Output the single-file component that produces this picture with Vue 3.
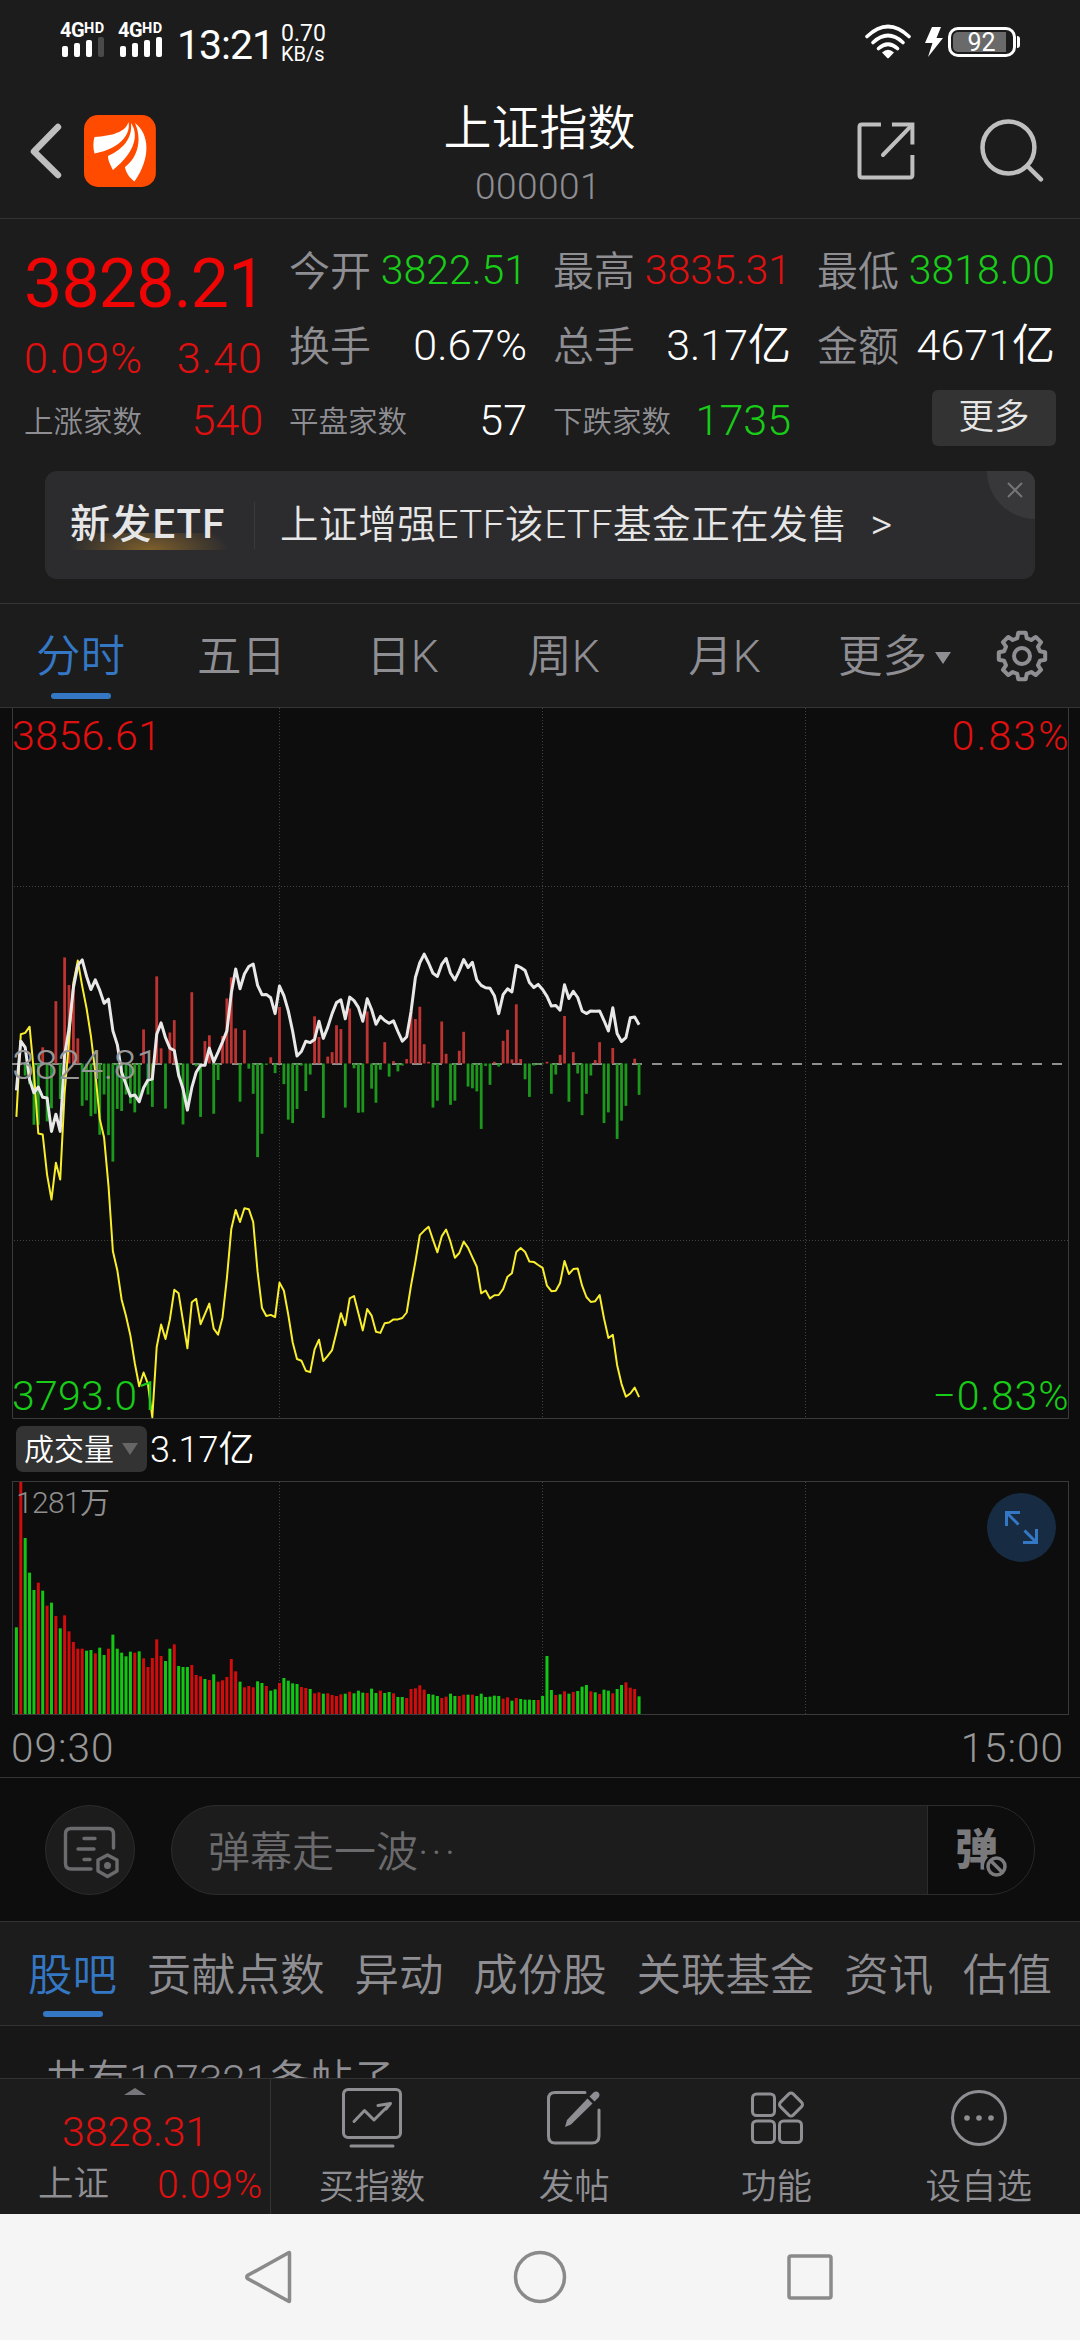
<template>
  <div class="page">
    <div class="status-bar">
      <div class="status-bar__left">
        <div v-for="(level, n) in [3, 4]" :key="n" class="signal">
          <div class="signal__net">4G<sup>HD</sup></div>
          <div class="signal__bars">
            <i
              v-for="b in 4"
              :key="b"
              :class="['signal__bar', `signal__bar--${b}`, { 'is-off': b > level }]"
            />
          </div>
        </div>
        <span class="clock">13:21</span>
        <div class="speed">
          <span>0.70</span>
          <span class="speed__unit">KB/s</span>
        </div>
      </div>
      <div class="status-bar__right">
        <svg class="wifi" width="48" height="36" viewBox="0 0 48 36">
          <g fill="none" stroke="#fff" stroke-width="3.6" stroke-linecap="round">
            <path d="M3 12.5Q24-7.5 45 12.5" />
            <path d="M9 18.5Q24 4.5 39 18.5" />
            <path d="M14.5 24.5Q24 16 33.500 24.500" />
          </g>
          <path d="M18 28.500Q24 23 30 28.500L24.800 34Q24 34.600 23.200 34Z" fill="#fff" />
        </svg>
        <svg class="bolt" width="20" height="32" viewBox="0 0 20 32">
          <path d="M8 1H17L12.500 12H19L4 31L8.500 17H1Z" fill="#fff" />
        </svg>
        <div class="battery"><span>92</span></div>
      </div>
    </div>

    <header class="header">
      <svg class="header__back" width="32" height="56" viewBox="0 0 32 56">
        <path d="M28 4L4 28.500L28 52" fill="none" stroke="#bfbfbf" stroke-width="6.500" stroke-linecap="round" stroke-linejoin="round" />
      </svg>
      <svg class="header__logo" width="72" height="72" viewBox="0 0 72 72">
        <rect width="72" height="72" rx="14" fill="#ff4b00" />
        <g fill="#fff">
          <path d="M44.500 7C47 16 40 33 10.500 38.500C9 33 9 27 10.500 22C28 21 42 17 44.500 7Z" />
          <path d="M47 8C55 19 52 37 29 55C27 51 24 46 24 41C38 35 49 24 47 8Z" />
          <path d="M51 8C66 19 67 44 50.500 66.500C46 63 42 58 41 52C55 42 58 23 51 8Z" />
        </g>
      </svg>
      <div class="header__title">
        <h1>上证指数</h1>
        <p>000001</p>
      </div>
      <svg class="header__share" width="58" height="58" viewBox="0 0 58 58">
        <g fill="none" stroke="#bfbfbf" stroke-width="4">
          <path d="M24 2.500H5Q2.500 2.500 2.500 5V53Q2.500 55.500 5 55.500H53Q55.500 55.500 55.500 53V33" />
          <path d="M35 2.500H55.500V22.500" />
          <path d="M54 4L26 33" stroke-linecap="round" />
        </g>
      </svg>
      <svg class="header__search" width="64" height="64" viewBox="0 0 64 64">
        <g fill="none" stroke="#bfbfbf" stroke-width="4.500" stroke-linecap="round">
          <circle cx="28.500" cy="28.500" r="26" />
          <path d="M47.500 47L61 60.500" />
        </g>
      </svg>
    </header>

    <section class="quote">
      <div class="quote__grid">
        <div class="quote__main">
          <div class="price">3828.21</div>
          <div class="change"><span>0.09%</span><span>3.40</span></div>
          <div class="cell cell--small"><label>上涨家数</label><b class="red">540</b></div>
        </div>
        <div v-for="(col, c) in quoteColumns" :key="c" class="quote__col">
          <div
            v-for="item in col"
            :key="item.label"
            :class="['cell', { 'cell--small': item.label.length > 2 }]"
          >
            <label>{{ item.label }}</label>
            <b :class="item.tone">{{ item.value }}</b>
          </div>
          <div v-if="col.length === 2" class="cell cell--end">
            <button class="more-btn">更多</button>
          </div>
        </div>
      </div>
      <div class="banner">
        <span class="banner__tag">新发ETF</span>
        <i class="banner__split" />
        <span class="banner__text">上证增强ETF该ETF基金正在发售</span>
        <span class="banner__arrow">&gt;</span>
        <span class="banner__close">
          <svg width="16" height="16" viewBox="0 0 16 16">
            <path d="M1 1L15 15M15 1L1 15" stroke="#757577" stroke-width="2" />
          </svg>
        </span>
      </div>
    </section>

    <nav class="period">
      <span
        v-for="(p, n) in periods"
        :key="p"
        :class="['period__item', { 'is-active': n === 0 }]"
        >{{ p }}</span
      >
      <span class="period__more">更多<i class="caret" /></span>
      <svg class="period__gear" width="54" height="54" viewBox="-27 -27 54 54">
        <g fill="none" stroke="#8e8e93" stroke-width="4" stroke-linejoin="round">
          <path :d="gearPath" />
          <circle r="8" />
        </g>
      </svg>
    </nav>

    <svg class="chart" width="1080" height="711" viewBox="0 708 1080 711">
      <g class="frame">
        <path d="M12.500 708V1418.500H1068.500V708" />
      </g>
      <g class="grid">
        <path d="M279.500 708V1418M542.500 708V1418M805.500 708V1418M14 886.500H1068M14 1240.500H1068" />
      </g>
      <path class="zero" d="M12 1064H1068" />
      <rect
        v-for="(v, i) in strength"
        :key="i"
        :x="px(i) - 1.4"
        :y="v > 0 ? 1063.5 - v / SY : 1063.5"
        width="2.800"
        :height="Math.abs(v) / SY"
        :fill="v > 0 ? '#bd3433' : '#1c981d'"
      />
      <polyline class="line line--avg" :points="toPoints(leading)" />
      <polyline class="line line--price" :points="toPoints(price)" />
      <g class="axis">
        <text x="12" y="749.500" class="red" textLength="149">3856.61</text>
        <text x="1068.500" y="749.500" class="red" text-anchor="end" textLength="117">0.83%</text>
        <text x="12" y="1079" class="gray" textLength="147">3824.81</text>
        <text x="12" y="1409.500" class="green" textLength="148">3793.01</text>
        <text x="1068.500" y="1409.500" class="green" text-anchor="end" textLength="136">−0.83%</text>
      </g>
    </svg>

    <div class="indicator">
      <span class="indicator__pill">成交量<i class="caret caret--dim" /></span>
      <span class="indicator__value">3.17亿</span>
    </div>

    <svg class="volume" width="1080" height="235" viewBox="0 1481 1080 235">
      <g class="frame">
        <rect x="12.500" y="1481.500" width="1056" height="233" />
      </g>
      <g class="grid">
        <path d="M279.500 1482V1714M542.500 1482V1714M805.500 1482V1714" />
      </g>
      <rect
        v-for="(v, i) in volumes"
        :key="i"
        :x="px(i) - 1.5"
        :y="1714 - v / 3"
        width="3"
        :height="v / 3"
        :fill="volumeTone[i] === 'r' ? '#d00c0c' : '#14c614'"
      />
      <text x="16" y="1513" class="volume__max" textLength="94">1281万</text>
      <circle cx="1021.500" cy="1527.500" r="34.500" fill="#172b42" />
      <g fill="none" stroke="#3477c4" stroke-width="3">
        <path d="M1020 1512.500H1006.500V1526M1006.500 1512.500L1018.500 1524.500" />
        <path d="M1036.500 1529V1542.500H1023M1036.500 1542.500L1024.500 1530.500" />
      </g>
    </svg>

    <div class="time-axis"><span>09:30</span><span>15:00</span></div>

    <div class="danmaku">
      <span class="danmaku__setting">
        <svg width="58" height="54" viewBox="0 0 58 54">
          <g fill="none" stroke="#6b6b6d" stroke-width="3.400" stroke-linecap="round" stroke-linejoin="round">
            <path d="M28 43H8Q2.500 43 2.500 37.500V8Q2.500 2.500 8 2.500H45Q50.500 2.500 50.500 8V22" />
            <path d="M21 12.500H32M15 23H31M21 33.500H27" />
            <path d="M44.500 29L54 34V45L44.500 50.500L35 45V34Z" />
            <circle cx="44.500" cy="39.500" r="1.800" />
          </g>
        </svg>
      </span>
      <div class="danmaku__box">
        <span class="danmaku__input">弹幕走一波<i>···</i></span>
        <span class="danmaku__toggle">
          弹
          <svg width="25" height="25" viewBox="0 0 25 25">
            <circle cx="12.500" cy="12.500" r="10" fill="#0d0d0d" stroke="#0d0d0d" stroke-width="5" />
            <g fill="none" stroke="#7a7a7c" stroke-width="3.500">
              <circle cx="12.500" cy="12.500" r="8.500" />
              <path d="M7 7L18 18" />
            </g>
          </svg>
        </span>
      </div>
    </div>

    <nav class="sections">
      <span
        v-for="(s, n) in sections"
        :key="s"
        :class="['sections__item', { 'is-active': n === 0 }]"
        >{{ s }}</span
      >
    </nav>

    <div class="posts"><p>共有197321条帖子</p></div>

    <footer class="toolbar">
      <div class="toolbar__index">
        <i class="toolbar__up" />
        <div class="toolbar__price">3828.31</div>
        <div class="toolbar__row"><span>上证</span><b>0.09%</b></div>
      </div>
      <div v-for="t in tools" :key="t.label" class="toolbar__item">
        <svg width="64" height="64" viewBox="0 0 64 64">
          <g v-if="t.icon === 'trade'" class="stroke">
            <rect x="3.500" y="3.500" width="57" height="48" rx="4.500" />
            <path d="M14 35.500L24.500 24.500L34 34L50.500 17.500M38 19.500L50.500 17.500L46 23" />
            <path d="M11 60H53" />
          </g>
          <g v-else-if="t.icon === 'post'">
            <path class="stroke" d="M43 6.500H13Q6.500 6.500 6.500 13V50Q6.500 57 13 57H50Q57 57 57 50V24" />
            <path class="solid" d="M45.500 12.500L50.500 17.500L29 38.500L23 41L25 34Z" />
            <path class="solid" d="M47.500 10.500L51.500 6.500Q54 4.500 56.500 6.500Q58.500 9 56.500 11.500L52.500 15.500Z" />
          </g>
          <g v-else-if="t.icon === 'apps'" class="stroke">
            <rect x="7.500" y="8" width="22" height="21.500" rx="4" />
            <rect x="7.500" y="35" width="22" height="21.500" rx="4" />
            <rect x="34.500" y="35" width="22" height="21.500" rx="4" />
            <rect x="37" y="9.500" width="18" height="18" rx="3" transform="rotate(45 46 18.500)" />
          </g>
          <g v-else>
            <circle class="stroke" cx="32" cy="32" r="26.500" />
            <circle v-for="x in [20, 32, 44]" :key="x" class="solid" :cx="x" cy="32" r="2.800" />
          </g>
        </svg>
        <span>{{ t.label }}</span>
      </div>
    </footer>

    <div class="sys-nav">
      <svg width="54" height="54" viewBox="0 0 54 54">
        <path d="M46.500 3V51Q46.500 52 45.500 51.200L4.500 28.500Q3 27 4.500 25.500L45.500 2.800Q46.500 2 46.500 3Z" />
      </svg>
      <svg width="54" height="54" viewBox="0 0 54 54"><circle cx="27" cy="27" r="24.500" /></svg>
      <svg width="54" height="54" viewBox="0 0 54 54">
        <rect x="6" y="6" width="42" height="42" rx="2" />
      </svg>
    </div>
  </div>
</template>

<script setup>
const periods = ["分时", "五日", "日K", "周K", "月K"];
const sections = ["股吧", "贡献点数", "异动", "成份股", "关联基金", "资讯", "估值"];

const quoteColumns = [
  [
    { label: "今开", value: "3822.51", tone: "green" },
    { label: "换手", value: "0.67%", tone: "white" },
    { label: "平盘家数", value: "57", tone: "white" },
  ],
  [
    { label: "最高", value: "3835.31", tone: "red" },
    { label: "总手", value: "3.17亿", tone: "white" },
    { label: "下跌家数", value: "1735", tone: "green" },
  ],
  [
    { label: "最低", value: "3818.00", tone: "green" },
    { label: "金额", value: "4671亿", tone: "white" },
  ],
];

const tools = [
  { label: "买指数", icon: "trade" },
  { label: "发帖", icon: "post" },
  { label: "功能", icon: "apps" },
  { label: "设自选", icon: "more" },
];

// one sample per minute, 09:30 - 11:52 on a 241 slot axis
const SY = 2.904;
const px = (i) => 16.4 + i * 4.385;
const toPoints = (list) =>
  list.map((v, i) => `${px(i).toFixed(1)},${(900 + v / SY).toFixed(1)}`).join(" ");

const price = [
  553, 410, 428, 522, 560, 543, 573, 575, 672, 622, 672, 450, 375, 255, 190, 174,
  222, 260, 232, 262, 300, 288, 380, 420, 500, 535, 570, 566, 586, 545, 523, 520,
  390, 357, 400, 430, 437, 508, 548, 610, 545, 500, 480, 480, 430, 470, 442, 412,
  380, 270, 200, 258, 215, 193, 186, 248, 275, 274, 284, 330, 250, 278, 322, 382,
  453, 440, 410, 414, 405, 352, 402, 370, 330, 298, 290, 345, 282, 292, 312, 352,
  287, 318, 361, 338, 350, 358, 351, 382, 410, 397, 325, 225, 182, 157, 183, 213,
  222, 187, 170, 212, 232, 205, 173, 196, 181, 232, 248, 255, 256, 278, 330, 275,
  258, 267, 190, 196, 205, 240, 254, 245, 260, 280, 308, 306, 320, 246, 286, 265,
  283, 322, 330, 322, 323, 322, 350, 380, 313, 388, 411, 400, 342, 340, 362,
];

const leading = [
  630, 390, 386, 368, 500, 678, 681, 798, 870, 763, 812, 560, 410, 240, 176, 250,
  315, 395, 500, 635, 690, 830, 1020, 1075, 1160, 1208, 1265, 1345, 1412, 1372,
  1405, 1502, 1298, 1233, 1275, 1218, 1132, 1142, 1222, 1302, 1168, 1158, 1232,
  1202, 1172, 1245, 1262, 1212, 1098, 955, 900, 935, 895, 898, 935, 1080, 1185,
  1208, 1205, 1211, 1111, 1135, 1205, 1285, 1333, 1338, 1367, 1371, 1305, 1277,
  1339, 1324, 1307, 1255, 1200, 1235, 1157, 1150, 1200, 1250, 1188, 1207, 1254,
  1257, 1229, 1227, 1218, 1218, 1214, 1198, 1120, 1050, 973, 960, 949, 987, 1023,
  977, 957, 993, 1039, 1025, 992, 1010, 1038, 1065, 1142, 1134, 1157, 1148, 1147,
  1130, 1094, 1084, 1022, 1011, 1022, 1050, 1051, 1060, 1068, 1120, 1136, 1135,
  1112, 1048, 1086, 1072, 1070, 1120, 1153, 1167, 1165, 1147, 1215, 1272, 1263,
  1350, 1405, 1442, 1433, 1416, 1444,
];

const strength = [
  0, 0, -35, -60, -178, -178, 47, -168, -130, 181, -103, 308, 228, 230, 73, -123,
  -107, -153, -146, -207, -90, -208, -285, -132, -138, -90, -116, -142, -110, 99,
  -90, -126, 253, 44, -131, 90, 126, -40, -177, -120, 207, -8, -155, 65, 82, -146,
  -48, 80, 189, 250, 102, -111, 97, -15, -88, -272, -204, -4, 18, -28, 164, -60,
  -163, -173, -132, -6, -80, -32, 137, 77, -158, 20, 33, 111, 100, -128, 160, -14,
  -143, -142, 151, -73, -114, -18, 62, -38, 7, -23, -6, 13, 150, 129, 165, 56, 5,
  -128, -108, 122, 28, -120, -108, 37, 92, -67, -72, -81, -190, -7, -62, 5, -9, 66,
  98, 12, 172, 13, -46, -97, -6, -3, -2, 5, -88, -32, 25, 138, -111, 33, -29, -150,
  -88, -35, 10, 62, -173, -142, 45, -219, -166, -123, 0, 14, -91,
];

const volumes = [
  260, 696, 528, 424, 372, 394, 370, 325, 334, 294, 257, 296, 248, 216, 196, 196,
  190, 192, 182, 199, 177, 196, 238, 196, 184, 173, 187, 184, 188, 167, 141, 168,
  224, 174, 159, 196, 209, 144, 141, 141, 147, 117, 113, 105, 102, 119, 97, 101,
  111, 165, 128, 97, 80, 84, 80, 98, 93, 84, 70, 74, 93, 108, 100, 92, 90, 81, 78,
  75, 62, 65, 61, 62, 57, 54, 59, 61, 67, 62, 70, 64, 63, 76, 63, 70, 63, 66, 62,
  51, 51, 48, 75, 77, 86, 73, 60, 58, 54, 48, 52, 61, 54, 54, 58, 58, 58, 54, 61,
  51, 52, 55, 54, 46, 50, 40, 48, 45, 43, 43, 42, 42, 54, 174, 72, 57, 59, 68, 61,
  66, 69, 82, 87, 68, 65, 60, 73, 70, 62, 75, 87, 95, 79, 75, 53,
];

const volumeTone =
  "grgggrgrgrgrrrrrggrggrggggg" +
  "rgrrrrrggrgggrrrgrgrrrrrgrrrggrggrggggrrg" +
  "rrgrrrrgrgggrggrggrggrrrrrgggrrggrrgrggggggrrgrggggr" +
  "gggrgrgrgggrgrggrggrrrg";

// eight-tooth outline of the settings gear
const gearPath = (() => {
  const pts = [];
  for (let n = 0; n < 8; n++) {
    const mid = (n * Math.PI) / 4;
    [
      [-0.26, 18.5],
      [-0.16, 23.5],
      [0.16, 23.5],
      [0.26, 18.5],
    ].forEach(([d, r]) => {
      pts.push(
        `${(r * Math.sin(mid + d)).toFixed(2)} ${(-r * Math.cos(mid + d)).toFixed(2)}`,
      );
    });
  }
  return `M${pts.join("L")}Z`;
})();
</script>

<style>
body {
  margin: 0;
  background: #1c1c1c;
}
</style>

<style scoped>
.page {
  width: 1080px;
  height: 2340px;
  display: flex;
  flex-direction: column;
  overflow: hidden;
  background: #1c1c1c;
  color: #8e8e93;
  font-family: Roboto, "Noto Sans CJK SC", sans-serif;
  font-weight: 350;
  line-height: 1;
  white-space: nowrap;
}

.page > * {
  box-sizing: border-box;
  flex: none;
}

.red {
  color: #e01010;
  fill: #e01010;
}

.green {
  color: #18cc18;
  fill: #18cc18;
}

.white {
  color: #fff;
}

.gray {
  fill: #979797;
}

/* status bar */
.status-bar {
  height: 84px;
  padding: 21px 60px 0;
  display: flex;
  justify-content: space-between;
  align-items: flex-start;
  color: #fff;
}

.status-bar__left,
.status-bar__right {
  display: flex;
}

.signal {
  width: 58px;
}

.signal__net {
  height: 16px;
  font-size: 20px;
  line-height: 18px;
  font-weight: 700;
  letter-spacing: -0.5px;
}

.signal__net sup {
  font-size: 14.5px;
  line-height: 1;
  vertical-align: 4px;
  letter-spacing: 0.3px;
}

.signal__bars {
  height: 20px;
  padding-left: 2px;
  display: flex;
  align-items: flex-end;
  gap: 6px;
}

.signal__bar {
  width: 6px;
  border-radius: 2px;
  background: #fff;
}

.signal__bar--1 {
  height: 11px;
}
.signal__bar--2 {
  height: 14px;
}
.signal__bar--3 {
  height: 17px;
}
.signal__bar--4 {
  height: 20px;
}

.is-off {
  background: #4a4a4a;
}

.clock {
  margin-left: 1px;
  width: 104px;
  font-size: 41px;
  line-height: 48px;
  font-weight: 400;
  letter-spacing: -1px;
}

.speed {
  display: flex;
  flex-direction: column;
  font-size: 23px;
  line-height: 25px;
  font-weight: 400;
}

.speed__unit {
  font-size: 20px;
  line-height: 17px;
}

.wifi {
  margin-top: 3px;
}

.bolt {
  margin: 5px 4px 0 12px;
}

.battery {
  position: relative;
  box-sizing: border-box;
  width: 68px;
  height: 30px;
  margin: 6px 4px 0 0;
  border: 3px solid #fff;
  border-radius: 10px;
  padding: 2px;
  font-size: 25px;
  line-height: 22px;
  font-weight: 400;
  text-align: center;
}

.battery span {
  display: block;
  width: 53px;
  height: 20px;
  padding-left: 4px;
  box-sizing: border-box;
  border-radius: 5px 0 0 5px;
  background: #6a6a6a;
}

.battery::after {
  content: "";
  position: absolute;
  right: -7px;
  top: 6px;
  width: 3px;
  height: 12px;
  border-radius: 0 3px 3px 0;
  background: #fff;
}

/* header */
.header {
  height: 135px;
  border-bottom: 1px solid #333;
  display: flex;
  align-items: center;
  padding: 0 36px 0 30px;
}

.header__logo {
  margin-left: 22px;
}

.header__title {
  width: 300px;
  margin: 0 168px 0 234px;
  padding-top: 6px;
  text-align: center;
}

.header__title h1 {
  margin: 0 0 10px;
  font-size: 48px;
  line-height: 56px;
  font-weight: 350;
  color: #fff;
}

.header__title p {
  margin: 0 3px 0 0;
  font-size: 37px;
  line-height: 40px;
  letter-spacing: 0.5px;
}

.header__search {
  margin-left: 65px;
}

/* quote */
.quote {
  height: 385px;
  border-bottom: 1px solid #333;
}

.quote__grid {
  box-sizing: border-box;
  height: 238px;
  padding: 14px 25px 0;
  display: grid;
  grid-template-columns: repeat(4, 238px);
  column-gap: 26px;
}

.quote__main {
  margin-left: -1px;
}

.price {
  height: 100px;
  font-size: 68px;
  line-height: 102px;
  font-weight: 400;
  letter-spacing: -0.8px;
  color: #f00505;
}

.change {
  height: 50px;
  display: flex;
  justify-content: space-between;
  font-size: 43px;
  line-height: 50px;
  letter-spacing: 1.1px;
  color: #e01010;
}

.cell {
  height: 75px;
  display: flex;
  align-items: center;
  justify-content: space-between;
  font-size: 41px;
}

.cell label {
  font-size: 41px;
  line-height: 44px;
  padding-top: 2px;
}

.cell b {
  font-weight: 350;
}

.cell b.white,
.cell--small b {
  font-size: 43px;
}

.cell--small label {
  font-size: 29.5px;
}

.cell--end {
  justify-content: flex-end;
}

.more-btn {
  width: 124px;
  height: 56px;
  margin: 0 -1px 5px 0;
  padding: 0;
  border: 0;
  border-radius: 6px;
  background: #333;
  color: #e6e6e6;
  font: inherit;
  font-size: 35.5px;
}

.banner {
  position: relative;
  width: 990px;
  height: 108px;
  margin: 14px 45px 0;
  box-sizing: border-box;
  padding-left: 25px;
  display: flex;
  align-items: center;
  overflow: hidden;
  border-radius: 12px;
  background: #2c2c2e;
  color: #e6e6e6;
  font-size: 38.5px;
}

.banner__tag {
  width: 160px;
  margin-right: 24px;
  padding: 9px 0;
  font-weight: 500;
  font-size: 40px;
  line-height: 40px;
  letter-spacing: 1.2px;
  background: radial-gradient(ellipse 80px 30px at 50% 100%, #80602c, rgba(44, 44, 46, 0)) 0 37px / 158px 17px no-repeat;
}

.banner__split {
  width: 1px;
  height: 47px;
  margin-right: 25px;
  background: #3a3a3c;
}

.banner__text {
  letter-spacing: 0.6px;
}

.banner__arrow {
  margin-left: 23px;
  font-size: 42px;
}

.banner__close {
  position: absolute;
  right: 0;
  top: 0;
  width: 48px;
  height: 48px;
  border-radius: 0 0 0 48px;
  background: #38383b;
}

.banner__close svg {
  position: absolute;
  left: 20px;
  top: 11px;
}

/* period tabs */
.period {
  height: 104px;
  border-bottom: 1px solid #333;
  display: flex;
  align-items: center;
  font-size: 44.5px;
}

.period__item {
  position: relative;
  width: 161px;
  height: 103px;
  line-height: 106px;
  text-align: center;
}

.period__more {
  width: 190px;
  padding: 4px 0 0 33px;
  box-sizing: border-box;
  display: flex;
  align-items: center;
}

.is-active {
  color: #3477c4;
}

.is-active::after {
  content: "";
  position: absolute;
  left: 50%;
  width: 60px;
  height: 6px;
  margin-left: -30px;
  border-radius: 3px;
  background: #3477c4;
}

.period .is-active::after {
  bottom: 8px;
}

.caret {
  margin-left: 8px;
  border: 8px solid transparent;
  border-top: 12px solid #8e8e93;
  border-bottom: 0;
}

.caret--dim {
  border-top-color: #666;
}

/* charts */
.chart,
.volume {
  display: block;
  background: #0d0d0d;
  font-size: 41px;
}

.frame {
  fill: none;
  stroke: #3a3a3a;
  stroke-width: 1;
}

.grid {
  fill: none;
  stroke: #414141;
  stroke-width: 1;
  stroke-dasharray: 1 2;
}

.zero {
  stroke: #8f8f8f;
  stroke-width: 2;
  stroke-dasharray: 10 10;
}

.line {
  fill: none;
  stroke-linejoin: round;
}

.line--avg {
  stroke: #f8ee2c;
  stroke-width: 2;
}

.line--price {
  stroke: #e8e8e8;
  stroke-width: 3;
}

.volume__max {
  font-size: 30px;
  fill: #8e8e8e;
}

.indicator {
  height: 62px;
  padding: 7px 0 0 16px;
  background: #0d0d0d;
  display: flex;
  color: #fff;
  font-size: 36px;
  line-height: 49px;
}

.indicator__pill {
  width: 131px;
  height: 46px;
  margin-right: 3px;
  padding-left: 8px;
  box-sizing: border-box;
  display: flex;
  align-items: center;
  border-radius: 7px;
  background: #333;
  font-size: 30px;
}

.time-axis {
  height: 62px;
  padding: 0 16px 0 11px;
  border-bottom: 1px solid #333;
  background: #0d0d0d;
  display: flex;
  justify-content: space-between;
  font-size: 40.5px;
  line-height: 64px;
  letter-spacing: 1px;
  color: #979797;
}

/* danmaku */
.danmaku {
  height: 144px;
  padding: 1px 45px 0;
  border-bottom: 1px solid #333;
  background: #0d0d0d;
  display: flex;
  align-items: center;
  gap: 36px;
}

.danmaku__setting {
  box-sizing: border-box;
  width: 90px;
  height: 90px;
  border: 1px solid #2c2c2c;
  border-radius: 50%;
  background: #1c1c1c;
  display: flex;
  align-items: center;
  justify-content: center;
}

.danmaku__setting svg {
  margin: 5px 0 0 3px;
}

.danmaku__box {
  box-sizing: border-box;
  flex: 1;
  height: 90px;
  border: 1px solid #2c2c2c;
  border-radius: 45px;
  overflow: hidden;
  display: flex;
  background: #1c1c1c;
}

.danmaku__input {
  flex: 1;
  padding-left: 36px;
  font-size: 42px;
  line-height: 94px;
  color: #6b6b6d;
}

.danmaku__input i {
  font-style: normal;
  letter-spacing: 3px;
}

.danmaku__toggle {
  position: relative;
  box-sizing: border-box;
  width: 107px;
  padding-left: 27px;
  border-left: 1px solid #2c2c2c;
  background: #0d0d0d;
  font-size: 43px;
  line-height: 88px;
  font-weight: 900;
  color: #7a7a7c;
}

.danmaku__toggle svg {
  position: absolute;
  left: 56px;
  top: 48px;
}

/* section tabs */
.sections {
  height: 104px;
  padding: 0 28px;
  border-bottom: 1px solid #333;
  display: flex;
  justify-content: space-between;
  font-size: 44.5px;
  line-height: 108px;
}

.sections__item {
  position: relative;
  height: 103px;
}

.sections .is-active::after {
  bottom: 8px;
}

.posts {
  height: 53px;
  padding: 30px 45px 0;
  overflow: hidden;
  background: #171717;
  border-bottom: 1px solid #333;
}

.posts p {
  margin: 0;
  font-size: 42px;
  line-height: 50px;
}

/* bottom toolbar */
.toolbar {
  height: 135px;
  display: flex;
}

.toolbar__index {
  box-sizing: border-box;
  width: 271px;
  padding: 9px 7px 0 38px;
  border-right: 1px solid #333;
}

.toolbar__up {
  display: block;
  width: 0;
  margin-left: 86px;
  border: 11px solid transparent;
  border-top: 0;
  border-bottom: 7px solid #77777b;
}

.toolbar__price {
  margin: 16px 0 0 24px;
  font-size: 41px;
  line-height: 43px;
  color: #e01010;
}

.toolbar__row {
  margin-top: 9px;
  display: flex;
  justify-content: space-between;
  font-size: 35.5px;
  line-height: 43px;
}

.toolbar__row b {
  font-size: 38.5px;
  font-weight: 350;
  letter-spacing: 0.8px;
  color: #e01010;
}

.toolbar__item {
  flex: 1;
  padding-top: 7px;
  display: flex;
  flex-direction: column;
  align-items: center;
  font-size: 35.5px;
}

.toolbar__item span {
  margin-top: 20px;
}

.stroke {
  fill: none;
  stroke: #8e8e93;
  stroke-width: 3;
  stroke-linecap: round;
  stroke-linejoin: round;
}

.solid {
  fill: #8e8e93;
}

.sys-nav {
  height: 126px;
  padding: 0 135px;
  background: #f5f5f5;
  display: flex;
  align-items: center;
  justify-content: space-around;
}

.sys-nav svg {
  fill: none;
  stroke: #8a8a8a;
  stroke-width: 3.5;
}
</style>
